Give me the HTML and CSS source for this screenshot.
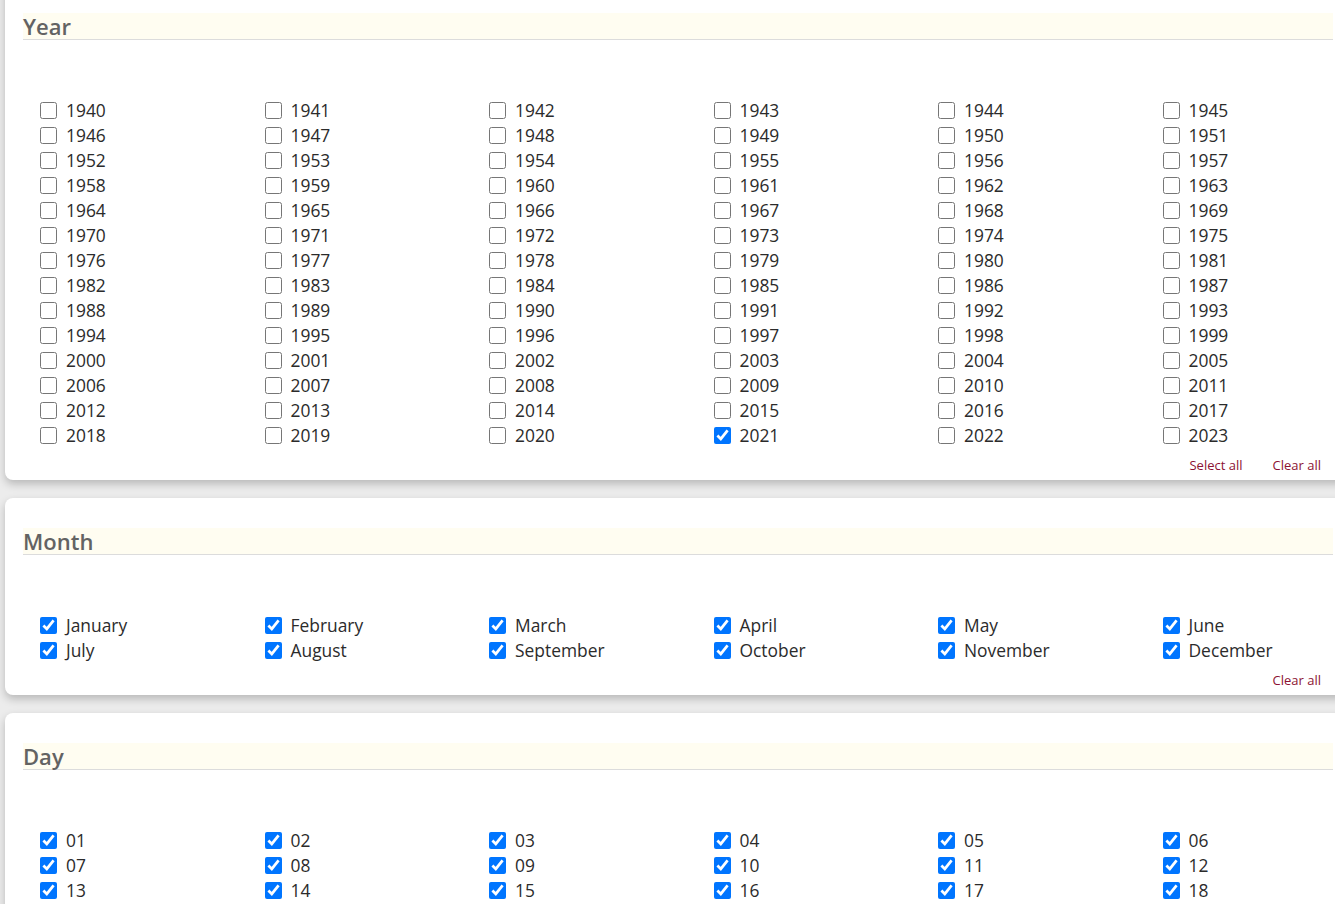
FILE: index.html
```html
<!DOCTYPE html>
<html lang="en">
<head>
<meta charset="utf-8">
<title>Filters</title>
<link rel="stylesheet" href="styles.css">
</head>
<body>
<div class="page">
  <section class="card card-first">
    <h2 class="card-title">Year</h2>
    <div class="options">
      <label class="opt"><input type="checkbox"><span>1940</span></label>
      <label class="opt"><input type="checkbox"><span>1941</span></label>
      <label class="opt"><input type="checkbox"><span>1942</span></label>
      <label class="opt"><input type="checkbox"><span>1943</span></label>
      <label class="opt"><input type="checkbox"><span>1944</span></label>
      <label class="opt"><input type="checkbox"><span>1945</span></label>
      <label class="opt"><input type="checkbox"><span>1946</span></label>
      <label class="opt"><input type="checkbox"><span>1947</span></label>
      <label class="opt"><input type="checkbox"><span>1948</span></label>
      <label class="opt"><input type="checkbox"><span>1949</span></label>
      <label class="opt"><input type="checkbox"><span>1950</span></label>
      <label class="opt"><input type="checkbox"><span>1951</span></label>
      <label class="opt"><input type="checkbox"><span>1952</span></label>
      <label class="opt"><input type="checkbox"><span>1953</span></label>
      <label class="opt"><input type="checkbox"><span>1954</span></label>
      <label class="opt"><input type="checkbox"><span>1955</span></label>
      <label class="opt"><input type="checkbox"><span>1956</span></label>
      <label class="opt"><input type="checkbox"><span>1957</span></label>
      <label class="opt"><input type="checkbox"><span>1958</span></label>
      <label class="opt"><input type="checkbox"><span>1959</span></label>
      <label class="opt"><input type="checkbox"><span>1960</span></label>
      <label class="opt"><input type="checkbox"><span>1961</span></label>
      <label class="opt"><input type="checkbox"><span>1962</span></label>
      <label class="opt"><input type="checkbox"><span>1963</span></label>
      <label class="opt"><input type="checkbox"><span>1964</span></label>
      <label class="opt"><input type="checkbox"><span>1965</span></label>
      <label class="opt"><input type="checkbox"><span>1966</span></label>
      <label class="opt"><input type="checkbox"><span>1967</span></label>
      <label class="opt"><input type="checkbox"><span>1968</span></label>
      <label class="opt"><input type="checkbox"><span>1969</span></label>
      <label class="opt"><input type="checkbox"><span>1970</span></label>
      <label class="opt"><input type="checkbox"><span>1971</span></label>
      <label class="opt"><input type="checkbox"><span>1972</span></label>
      <label class="opt"><input type="checkbox"><span>1973</span></label>
      <label class="opt"><input type="checkbox"><span>1974</span></label>
      <label class="opt"><input type="checkbox"><span>1975</span></label>
      <label class="opt"><input type="checkbox"><span>1976</span></label>
      <label class="opt"><input type="checkbox"><span>1977</span></label>
      <label class="opt"><input type="checkbox"><span>1978</span></label>
      <label class="opt"><input type="checkbox"><span>1979</span></label>
      <label class="opt"><input type="checkbox"><span>1980</span></label>
      <label class="opt"><input type="checkbox"><span>1981</span></label>
      <label class="opt"><input type="checkbox"><span>1982</span></label>
      <label class="opt"><input type="checkbox"><span>1983</span></label>
      <label class="opt"><input type="checkbox"><span>1984</span></label>
      <label class="opt"><input type="checkbox"><span>1985</span></label>
      <label class="opt"><input type="checkbox"><span>1986</span></label>
      <label class="opt"><input type="checkbox"><span>1987</span></label>
      <label class="opt"><input type="checkbox"><span>1988</span></label>
      <label class="opt"><input type="checkbox"><span>1989</span></label>
      <label class="opt"><input type="checkbox"><span>1990</span></label>
      <label class="opt"><input type="checkbox"><span>1991</span></label>
      <label class="opt"><input type="checkbox"><span>1992</span></label>
      <label class="opt"><input type="checkbox"><span>1993</span></label>
      <label class="opt"><input type="checkbox"><span>1994</span></label>
      <label class="opt"><input type="checkbox"><span>1995</span></label>
      <label class="opt"><input type="checkbox"><span>1996</span></label>
      <label class="opt"><input type="checkbox"><span>1997</span></label>
      <label class="opt"><input type="checkbox"><span>1998</span></label>
      <label class="opt"><input type="checkbox"><span>1999</span></label>
      <label class="opt"><input type="checkbox"><span>2000</span></label>
      <label class="opt"><input type="checkbox"><span>2001</span></label>
      <label class="opt"><input type="checkbox"><span>2002</span></label>
      <label class="opt"><input type="checkbox"><span>2003</span></label>
      <label class="opt"><input type="checkbox"><span>2004</span></label>
      <label class="opt"><input type="checkbox"><span>2005</span></label>
      <label class="opt"><input type="checkbox"><span>2006</span></label>
      <label class="opt"><input type="checkbox"><span>2007</span></label>
      <label class="opt"><input type="checkbox"><span>2008</span></label>
      <label class="opt"><input type="checkbox"><span>2009</span></label>
      <label class="opt"><input type="checkbox"><span>2010</span></label>
      <label class="opt"><input type="checkbox"><span>2011</span></label>
      <label class="opt"><input type="checkbox"><span>2012</span></label>
      <label class="opt"><input type="checkbox"><span>2013</span></label>
      <label class="opt"><input type="checkbox"><span>2014</span></label>
      <label class="opt"><input type="checkbox"><span>2015</span></label>
      <label class="opt"><input type="checkbox"><span>2016</span></label>
      <label class="opt"><input type="checkbox"><span>2017</span></label>
      <label class="opt"><input type="checkbox"><span>2018</span></label>
      <label class="opt"><input type="checkbox"><span>2019</span></label>
      <label class="opt"><input type="checkbox"><span>2020</span></label>
      <label class="opt"><input type="checkbox" checked><span>2021</span></label>
      <label class="opt"><input type="checkbox"><span>2022</span></label>
      <label class="opt"><input type="checkbox"><span>2023</span></label>
    </div>
    <div class="actions">
      <a class="action" href="#">Select all</a>
      <a class="action" href="#">Clear all</a>
    </div>
  </section>

  <section class="card">
    <h2 class="card-title">Month</h2>
    <div class="options">
      <label class="opt"><input type="checkbox" checked><span>January</span></label>
      <label class="opt"><input type="checkbox" checked><span>February</span></label>
      <label class="opt"><input type="checkbox" checked><span>March</span></label>
      <label class="opt"><input type="checkbox" checked><span>April</span></label>
      <label class="opt"><input type="checkbox" checked><span>May</span></label>
      <label class="opt"><input type="checkbox" checked><span>June</span></label>
      <label class="opt"><input type="checkbox" checked><span>July</span></label>
      <label class="opt"><input type="checkbox" checked><span>August</span></label>
      <label class="opt"><input type="checkbox" checked><span>September</span></label>
      <label class="opt"><input type="checkbox" checked><span>October</span></label>
      <label class="opt"><input type="checkbox" checked><span>November</span></label>
      <label class="opt"><input type="checkbox" checked><span>December</span></label>
    </div>
    <div class="actions">
      <a class="action" href="#">Clear all</a>
    </div>
  </section>

  <section class="card">
    <h2 class="card-title">Day</h2>
    <div class="options">
      <label class="opt"><input type="checkbox" checked><span>01</span></label>
      <label class="opt"><input type="checkbox" checked><span>02</span></label>
      <label class="opt"><input type="checkbox" checked><span>03</span></label>
      <label class="opt"><input type="checkbox" checked><span>04</span></label>
      <label class="opt"><input type="checkbox" checked><span>05</span></label>
      <label class="opt"><input type="checkbox" checked><span>06</span></label>
      <label class="opt"><input type="checkbox" checked><span>07</span></label>
      <label class="opt"><input type="checkbox" checked><span>08</span></label>
      <label class="opt"><input type="checkbox" checked><span>09</span></label>
      <label class="opt"><input type="checkbox" checked><span>10</span></label>
      <label class="opt"><input type="checkbox" checked><span>11</span></label>
      <label class="opt"><input type="checkbox" checked><span>12</span></label>
      <label class="opt"><input type="checkbox" checked><span>13</span></label>
      <label class="opt"><input type="checkbox" checked><span>14</span></label>
      <label class="opt"><input type="checkbox" checked><span>15</span></label>
      <label class="opt"><input type="checkbox" checked><span>16</span></label>
      <label class="opt"><input type="checkbox" checked><span>17</span></label>
      <label class="opt"><input type="checkbox" checked><span>18</span></label>
      <label class="opt"><input type="checkbox" checked><span>19</span></label>
      <label class="opt"><input type="checkbox" checked><span>20</span></label>
      <label class="opt"><input type="checkbox" checked><span>21</span></label>
      <label class="opt"><input type="checkbox" checked><span>22</span></label>
      <label class="opt"><input type="checkbox" checked><span>23</span></label>
      <label class="opt"><input type="checkbox" checked><span>24</span></label>
      <label class="opt"><input type="checkbox" checked><span>25</span></label>
      <label class="opt"><input type="checkbox" checked><span>26</span></label>
      <label class="opt"><input type="checkbox" checked><span>27</span></label>
      <label class="opt"><input type="checkbox" checked><span>28</span></label>
      <label class="opt"><input type="checkbox" checked><span>29</span></label>
      <label class="opt"><input type="checkbox" checked><span>30</span></label>
      <label class="opt"><input type="checkbox" checked><span>31</span></label>
    </div>
    <div class="actions">
      <a class="action" href="#">Clear all</a>
    </div>
  </section>
</div>
</body>
</html>
```
FILE: styles.css
```css
html, body {
  margin: 0;
  padding: 0;
  overflow: hidden;
}

body {
  background: #ececec;
  font-family: "Open Sans", "Noto Sans", "Liberation Sans", sans-serif;
  color: #2b2b2b;
}

.page {
  padding-left: 5px;
  width: 1346px;
}

.card {
  width: 1310px;
  background: #ffffff;
  border-radius: 8px;
  box-shadow: 0 4px 9px rgba(0, 0, 0, 0.22);
  padding: 30px 18px 0 18px;
  margin-bottom: 18px;
}

.card-first {
  margin-top: -17px;
}

.card-title {
  margin: 0;
  height: 26px;
  line-height: 26px;
  font-size: 22px;
  font-weight: 600;
  color: #636363;
  background: #fffdf1;
  border-bottom: 1px solid #dcdcdc;
}

.options {
  display: grid;
  grid-template-columns: repeat(6, 224.5px);
  margin-top: 58px;
  padding-left: 17px;
}

.opt {
  display: flex;
  align-items: center;
  height: 25px;
  font-size: 17.4px;
  line-height: 25px;
  white-space: nowrap;
}

.opt input {
  width: 17px;
  height: 17px;
  margin: 0 9px 0 0;
}

.actions {
  display: flex;
  justify-content: flex-end;
  gap: 30px;
  padding: 8px 12px 6px 0;
  height: 18px;
}

.action {
  font-size: 13px;
  line-height: 18px;
  color: #8c1233;
  text-decoration: none;
}
```
